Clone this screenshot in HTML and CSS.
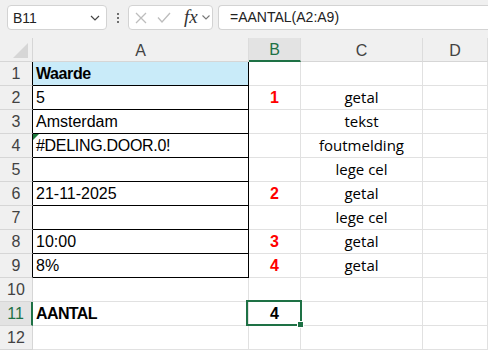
FILE: index.html
```html
<!DOCTYPE html>
<html>
<head>
  <meta charset="utf-8">
  <title>AANTAL</title>
  <link rel="stylesheet" href="styles.css">
</head>
<body>
  <header class="toolbar">
    <div class="namebox">
      <span>B11</span>
      <svg class="chev" width="10" height="6" viewBox="0 0 10 6"><path d="M1 1l4 4 4-4" fill="none" stroke="#444" stroke-width="1.2"/></svg>
    </div>
    <div class="dots"><i></i><i></i><i></i></div>
    <div class="fxbox">
      <svg class="cancel" width="12" height="12" viewBox="0 0 12 12"><path d="M1 1l10 10M11 1L1 11" stroke="#bdbdbd" stroke-width="1.3"/></svg>
      <svg class="enter" width="14" height="11" viewBox="0 0 14 11"><path d="M1 5.5l4 4.5 8-9" fill="none" stroke="#bdbdbd" stroke-width="1.3"/></svg>
      <span class="fx">fx</span>
      <svg class="chev" width="8" height="5" viewBox="0 0 8 5"><path d="M0.5 0.5l3.5 3.5 3.5-3.5" fill="none" stroke="#777" stroke-width="1.1"/></svg>
    </div>
    <div class="formula">=AANTAL(A2:A9)</div>
  </header>

  <section class="sheet">
    <div class="corner"><span class="tri"></span></div>
    <div class="colhead">A</div>
    <div class="colhead sel">B</div>
    <div class="colhead">C</div>
    <div class="colhead">D</div>

    <div class="rh edge">1</div>
    <div class="cell a title">Waarde</div>
    <div class="cell"></div>
    <div class="cell"></div>
    <div class="cell"></div>

    <div class="rh edge">2</div>
    <div class="cell a">5</div>
    <div class="cell num">1</div>
    <div class="cell kind">getal</div>
    <div class="cell"></div>

    <div class="rh edge">3</div>
    <div class="cell a">Amsterdam</div>
    <div class="cell"></div>
    <div class="cell kind">tekst</div>
    <div class="cell"></div>

    <div class="rh edge">4</div>
    <div class="cell a flag">#DELING.DOOR.0!</div>
    <div class="cell"></div>
    <div class="cell kind">foutmelding</div>
    <div class="cell"></div>

    <div class="rh edge">5</div>
    <div class="cell a"></div>
    <div class="cell"></div>
    <div class="cell kind">lege cel</div>
    <div class="cell"></div>

    <div class="rh edge">6</div>
    <div class="cell a">21-11-2025</div>
    <div class="cell num">2</div>
    <div class="cell kind">getal</div>
    <div class="cell"></div>

    <div class="rh edge">7</div>
    <div class="cell a"></div>
    <div class="cell"></div>
    <div class="cell kind">lege cel</div>
    <div class="cell"></div>

    <div class="rh edge">8</div>
    <div class="cell a">10:00</div>
    <div class="cell num">3</div>
    <div class="cell kind">getal</div>
    <div class="cell"></div>

    <div class="rh edge">9</div>
    <div class="cell a">8%</div>
    <div class="cell num">4</div>
    <div class="cell kind">getal</div>
    <div class="cell"></div>

    <div class="rh">10</div>
    <div class="cell"></div>
    <div class="cell"></div>
    <div class="cell"></div>
    <div class="cell"></div>

    <div class="rh sel">11</div>
    <div class="cell bold">AANTAL</div>
    <div class="cell result">4<span class="outline"></span><span class="handle"></span></div>
    <div class="cell"></div>
    <div class="cell"></div>

    <div class="rh">12</div>
    <div class="cell"></div>
    <div class="cell"></div>
    <div class="cell"></div>
    <div class="cell"></div>
  </section>
</body>
</html>
```

FILE: styles.css
```css
html, body {
  margin: 0;
  padding: 0;
}

body {
  background: #fff;
  color: #000;
  font-family: 'Liberation Sans', Arial, sans-serif;
  overflow: hidden;
}

* {
  box-sizing: border-box;
}

.toolbar {
  align-items: flex-start;
  background: #f0f0f0;
  display: flex;
  height: 38px;
  padding: 5px 0 0 7px;
}

.namebox {
  align-items: center;
  background: #fff;
  border: 1px solid #d3d3d3;
  border-radius: 4px;
  color: #222;
  display: flex;
  font-size: 14px;
  height: 25px;
  justify-content: space-between;
  padding: 0 6px 0 5px;
  width: 100px;
}

.dots {
  align-items: center;
  display: flex;
  flex-direction: column;
  gap: 2px;
  height: 25px;
  justify-content: center;
  width: 21px;
}

.dots i {
  background: #444;
  border-radius: 50%;
  display: block;
  height: 2px;
  width: 2px;
}

.fxbox {
  align-items: center;
  background: #fff;
  border: 1px solid #d3d3d3;
  border-radius: 4px;
  display: flex;
  height: 25px;
  padding-left: 6px;
  width: 85px;
}

.fxbox .enter {
  margin-left: 10px;
}

.fxbox .fx {
  color: #333;
  font-family: 'Liberation Serif', serif;
  font-size: 19px;
  font-style: italic;
  margin-left: 13px;
  margin-top: -2px;
}

.fxbox .chev {
  margin-left: 4px;
}

.formula {
  background: #fff;
  border: 1px solid #d3d3d3;
  border-radius: 4px 0 0 4px;
  border-right: 0;
  color: #222;
  flex: 1;
  font-size: 14px;
  height: 25px;
  line-height: 23px;
  margin-left: 5px;
  padding-left: 11px;
}

.sheet {
  display: grid;
  grid-auto-rows: 24px;
  grid-template-columns: 33px 216px 52px 122px 1fr;
}

.corner,
.colhead,
.rh {
  background: #f0f0f0;
  border-bottom: 1px solid #d6d6d6;
  border-right: 1px solid #d6d6d6;
  color: #424242;
  font-size: 16px;
  line-height: 23px;
  text-align: center;
}

.corner {
  position: relative;
}

.corner .tri {
  border-bottom: 15px solid #d6d6d6;
  border-left: 15px solid transparent;
  bottom: 3px;
  position: absolute;
  right: 4px;
}

.colhead {
  border-right-color: #dcdcdc;
  padding-top: 1px;
}

.colhead.sel {
  background: #e3e3e3;
  border-bottom: 2px solid #1e7145;
  color: #1e7145;
  line-height: 22px;
}

.rh.edge {
  border-right-color: #000;
}

.rh.sel {
  background: #e3e3e3;
  border-right: 2px solid #1e7145;
  color: #1e7145;
}

.cell {
  border-bottom: 1px solid #e1e1e1;
  border-right: 1px solid #e1e1e1;
  font-size: 16px;
  line-height: 23px;
  overflow: visible;
  padding: 0 3px;
  position: relative;
  white-space: nowrap;
}

.cell.a {
  border-bottom-color: #000;
  border-right-color: #000;
}

.cell.title {
  background: #c9ebf9;
  font-weight: bold;
  letter-spacing: -0.4px;
}

.cell.bold {
  font-weight: bold;
  letter-spacing: -0.6px;
}

.cell.flag {
  letter-spacing: -0.3px;
}

.cell.flag::before {
  border-left: 6px solid #1e7a3c;
  border-bottom: 6px solid transparent;
  content: '';
  left: 0;
  position: absolute;
  top: 0;
}

.cell.num {
  color: #ff0000;
  font-weight: bold;
  text-align: center;
}

.cell.kind {
  font-family: 'Open Sans', sans-serif;
  font-size: 15px;
  text-align: center;
}

.cell.result {
  font-weight: bold;
  text-align: center;
}

.outline {
  border: 2px solid #1e7145;
  bottom: -1px;
  left: -3px;
  position: absolute;
  right: -2px;
  top: -2px;
  z-index: 2;
}

.handle {
  background: #1e7145;
  border: 1px solid #fff;
  bottom: -3px;
  height: 7px;
  position: absolute;
  right: -4px;
  width: 7px;
  z-index: 3;
}
```
